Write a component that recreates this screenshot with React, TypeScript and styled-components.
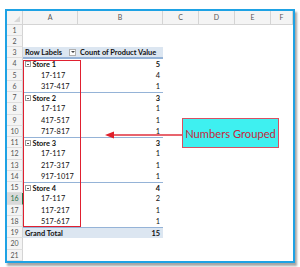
import React from "react";
import styled, { createGlobalStyle } from "styled-components";

const Global = createGlobalStyle`
  html, body { margin: 0; padding: 0; background: #ffffff; }
  body { font-family: Lato, "Liberation Sans", sans-serif; }
`;

const COLS = "16px 55px 85px 36px 36px 36px 1fr";

const Page = styled.div`
  padding: 9px 0 0 5px;
  width: 300px;
  height: 267px;
  box-sizing: border-box;
`;

const Frame = styled.div`
  position: relative;
  width: 290px;
  height: 254px;
  box-sizing: border-box;
  border: 2px solid #1ea2e4;
  box-shadow: 2px 3px 2px rgba(0, 0, 0, 0.35);
  background: #fff;
  overflow: hidden;
`;

const HeaderRow = styled.div`
  display: grid;
  grid-template-columns: ${COLS};
  height: 13.5px;
  background: #f4f4f4;
  border-bottom: 1px solid #d4d4d4;
  box-sizing: border-box;
`;

const Corner = styled.div`
  position: relative;
  border-right: 1px solid #d4d4d4;
  &::after {
    content: "";
    position: absolute;
    right: 2px;
    bottom: 2px;
    border-left: 6px solid transparent;
    border-bottom: 6px solid #d8d8d8;
  }
`;

const ColHead = styled.div`
  display: flex;
  align-items: center;
  justify-content: center;
  font-size: 7px;
  color: #555;
  border-right: 1px solid #d4d4d4;
`;

const Row = styled.div`
  display: grid;
  grid-template-columns: ${COLS};
  height: 11.25px;
`;

const RowNum = styled.div<{ $active?: boolean }>`
  display: flex;
  align-items: center;
  justify-content: center;
  font-size: 7px;
  color: ${(p) => (p.$active ? "#217346" : "#555")};
  background: ${(p) => (p.$active ? "#d9d9d9" : "#f4f4f4")};
  border-right: 1px solid ${(p) => (p.$active ? "#217346" : "#d4d4d4")};
  border-bottom: 1px solid #dedede;
  box-sizing: border-box;
`;

type Kind = "head" | "store" | "item" | "total" | "blank";

const bgFor = (k: Kind) =>
  k === "head" || k === "total" ? "#dce6f1" : "transparent";

const LabelCell = styled.div<{ $kind: Kind }>`
  display: flex;
  align-items: center;
  font-size: 7.4px;
  color: #111;
  white-space: nowrap;
  font-weight: ${(p) => (p.$kind === "item" ? 400 : 700)};
  padding-left: ${(p) => (p.$kind === "item" ? "18px" : "2px")};
  background: ${(p) => bgFor(p.$kind)};
  border-top: ${(p) =>
    p.$kind === "store" || p.$kind === "total" ? "1px solid #95b3d7" : "none"};
  border-bottom: ${(p) => (p.$kind === "head" ? "1px solid #95b3d7" : "none")};
  box-sizing: border-box;
  overflow: visible;
`;

const ValueCell = styled(LabelCell)`
  justify-content: flex-end;
  padding-left: 0;
  padding-right: 3px;
`;

const Blank = styled.div``;

const Toggle = styled.span`
  display: inline-block;
  width: 4px;
  height: 4px;
  border: 0.8px solid #9a9a9a;
  margin-right: 1.5px;
  box-sizing: content-box;
  position: relative;
  &::after {
    content: "";
    position: absolute;
    left: 0.8px;
    right: 0.8px;
    top: 1.6px;
    height: 0.8px;
    background: #555;
  }
`;

const Dropdown = styled.span`
  display: inline-flex;
  align-items: center;
  justify-content: center;
  width: 7px;
  height: 7px;
  margin-left: 3px;
  border: 1px solid #b0b0b0;
  background: #fdfdfd;
  box-sizing: border-box;
  &::after {
    content: "";
    border-left: 2px solid transparent;
    border-right: 2px solid transparent;
    border-top: 2.5px solid #444;
  }
`;

const HeadLabel = styled.div`
  display: flex;
  align-items: center;
  justify-content: space-between;
  width: 100%;
  padding-right: 2px;
`;

const RedBox = styled.div`
  position: absolute;
  left: 16px;
  top: 49px;
  width: 58px;
  height: 167px;
  border: 1.6px solid #e02030;
  box-sizing: border-box;
  pointer-events: none;
`;

const Callout = styled.div`
  position: absolute;
  left: 175px;
  top: 107px;
  width: 97px;
  height: 30px;
  background: #3ef0f0;
  border: 1.5px solid #d85062;
  box-sizing: border-box;
  display: flex;
  align-items: center;
  justify-content: center;
  font-family: Lato, "Liberation Sans", sans-serif;
  font-size: 11.2px;
  color: #c4283e;
  white-space: nowrap;
`;

const ArrowSvg = styled.svg`
  position: absolute;
  left: 98px;
  top: 119px;
`;

const LETTERS = ["A", "B", "C", "D", "E", "F"];

type R = { label?: string; value?: string; kind: Kind };

const rows: R[] = [
  { kind: "blank" },
  { kind: "blank" },
  { label: "Row Labels", value: "Count of Product Value", kind: "head" },
  { label: "Store 1", value: "5", kind: "store" },
  { label: "17-117", value: "4", kind: "item" },
  { label: "317-417", value: "1", kind: "item" },
  { label: "Store 2", value: "3", kind: "store" },
  { label: "17-117", value: "1", kind: "item" },
  { label: "417-517", value: "1", kind: "item" },
  { label: "717-817", value: "1", kind: "item" },
  { label: "Store 3", value: "3", kind: "store" },
  { label: "17-117", value: "1", kind: "item" },
  { label: "217-317", value: "1", kind: "item" },
  { label: "917-1017", value: "1", kind: "item" },
  { label: "Store 4", value: "4", kind: "store" },
  { label: "17-117", value: "2", kind: "item" },
  { label: "117-217", value: "1", kind: "item" },
  { label: "517-617", value: "1", kind: "item" },
  { label: "Grand Total", value: "15", kind: "total" },
  { kind: "blank" },
  { kind: "blank" },
];

export default function App() {
  return (
    <>
      <Global />
      <Page>
        <Frame>
          <HeaderRow>
            <Corner />
            {LETTERS.map((l) => (
              <ColHead key={l}>{l}</ColHead>
            ))}
          </HeaderRow>
          {rows.map((r, i) => (
            <Row key={i}>
              <RowNum $active={i + 1 === 16}>{i + 1}</RowNum>
              {r.kind === "blank" ? (
                <>
                  <Blank />
                  <Blank />
                </>
              ) : r.kind === "head" ? (
                <>
                  <LabelCell $kind="head">
                    <HeadLabel>
                      {r.label}
                      <Dropdown />
                    </HeadLabel>
                  </LabelCell>
                  <LabelCell $kind="head">{r.value}</LabelCell>
                </>
              ) : (
                <>
                  <LabelCell $kind={r.kind}>
                    {r.kind === "store" && <Toggle />}
                    {r.label}
                  </LabelCell>
                  <ValueCell $kind={r.kind}>{r.value}</ValueCell>
                </>
              )}
              <Blank />
              <Blank />
              <Blank />
              <Blank />
            </Row>
          ))}
          <RedBox />
          <ArrowSvg width="80" height="14" viewBox="0 0 80 14">
            <line x1="6" y1="5" x2="80" y2="5" stroke="#e0303c" strokeWidth="1.3" />
            <polygon points="0,5 9,1.5 9,8.5" fill="#e0202c" />
          </ArrowSvg>
          <Callout>Numbers Grouped</Callout>
        </Frame>
      </Page>
    </>
  );
}
